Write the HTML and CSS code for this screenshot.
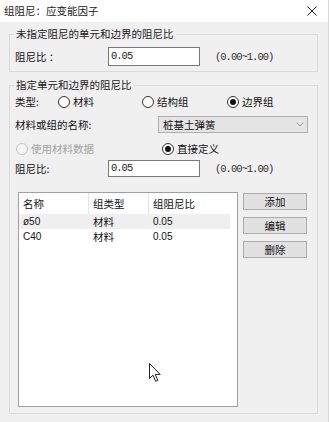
FILE: index.html
```html
<!DOCTYPE html>
<html>
<head>
<meta charset="utf-8">
<link rel="stylesheet" href="styles.css">
</head>
<body>
<div class="titlebar">
  <span class="title">组阻尼：应变能因子</span>
  <svg class="close" width="10" height="10" viewBox="0 0 10 10"><path d="M0.5 0.5L9.5 9.5M9.5 0.5L0.5 9.5" stroke="#222" stroke-width="1" fill="none"/></svg>
</div>
<fieldset class="group g1">
  <legend>未指定阻尼的单元和边界的阻尼比</legend>
  <div class="row r-damp1">
    <span class="lbl w93">阻尼比 ：</span>
    <span class="input">0.05</span>
    <span class="range">(0.00~1.00)</span>
  </div>
</fieldset>
<fieldset class="group g2">
  <legend>指定单元和边界的阻尼比</legend>
  <div class="row r-type">
    <span class="lbl w43">类型:</span>
    <span class="radio w84"><i class="dot"></i>材料</span>
    <span class="radio w85"><i class="dot"></i>结构组</span>
    <span class="radio"><i class="dot on"></i>边界组</span>
  </div>
  <div class="row r-name">
    <span class="lbl w143">材料或组的名称:</span>
    <span class="select">桩基土弹簧<svg class="chev" width="8" height="5" viewBox="0 0 8 5"><path d="M0.5 0.5L4 4L7.5 0.5" stroke="#999" fill="none"/></svg></span>
  </div>
  <div class="row r-src">
    <span class="radio disabled w145"><i class="dot"></i>使用材料数据</span>
    <span class="radio"><i class="dot on"></i>直接定义</span>
  </div>
  <div class="row r-damp2">
    <span class="lbl w93">阻尼比:</span>
    <span class="input">0.05</span>
    <span class="range">(0.00~1.00)</span>
  </div>
  <div class="listarea">
    <div class="list">
      <div class="lhead">
        <span class="c1">名称</span><span class="c2">组类型</span><span class="c3">组阻尼比</span>
      </div>
      <div class="lrow sel"><span class="c1 num">ø50</span><span class="c2">材料</span><span class="c3 num">0.05</span></div>
      <div class="lrow"><span class="c1 num">C40</span><span class="c2">材料</span><span class="c3 num">0.05</span></div>
    </div>
    <div class="buttons">
      <span class="btn">添加</span>
      <span class="btn">编辑</span>
      <span class="btn">删除</span>
    </div>
  </div>
</fieldset>
<svg class="cursor" width="13" height="20" viewBox="0 0 13 20"><path d="M0.5 0.5L0.5 15.5L4 12.2L6.6 18.3L8.8 17.4L6.3 11.4L11.2 11.4Z" fill="#fff" stroke="#222" stroke-width="1" stroke-linejoin="miter"/></svg>
</body>
</html>
```
FILE: styles.css
```css
* { box-sizing: border-box; }
html, body { margin: 0; padding: 0; }
body {
  width: 329px;
  height: 422px;
  background: #f0f0f0;
  font-family: "Noto Sans CJK SC", "Noto Sans", sans-serif;
  font-size: 10.5px;
  line-height: 14px;
  color: #111;
  overflow: hidden;
  position: relative;
  border-right: 1px solid #d8d8d8;
}
.titlebar {
  height: 22px;
  background: #fff;
  display: flex;
  align-items: center;
  justify-content: space-between;
  padding: 0 11px 0 4px;
}
.title { font-size: 10.5px; color: #222; }
.group {
  margin: 5px 0 0 9px;
  width: 309px;
  border: 1px solid #d9d9d9;
  padding: 0 5px;
  min-width: 0;
}
.group legend {
  padding: 0 2px;
  margin-left: -1px;
  line-height: 14px;
  color: #1a1a1a;
}
.g2 { margin-top: 6px; padding-bottom: 6px; }
.row { display: flex; align-items: center; }
.lbl { flex: none; }
.w43 { width: 43px; }
.w84 { width: 84px; }
.w85 { width: 85px; }
.w93 { width: 93px; }
.w143 { width: 143px; }
.w145 { width: 146px; }
.r-damp1 { padding: 6px 0 5px; }
.input {
  width: 92px;
  height: 19px;
  background: #fff;
  border: 1px solid #7a7a7a;
  font-family: "Liberation Mono", monospace;
  font-size: 10.5px;
  letter-spacing: -1px;
  line-height: 17px;
  padding-left: 2px;
  color: #222;
}
.range {
  margin-left: 15px;
  font-family: "Liberation Mono", monospace;
  font-size: 10.5px;
  letter-spacing: -1px;
  color: #333;
}
.r-type { margin-top: 2px; height: 16px; }
.radio { display: flex; align-items: center; flex: none; }
.dot {
  width: 12px;
  height: 12px;
  border: 1px solid #333;
  border-radius: 50%;
  background: #fff;
  margin-right: 3px;
  display: flex;
  align-items: center;
  justify-content: center;
}
.dot.on::after {
  content: "";
  width: 6px;
  height: 6px;
  border-radius: 50%;
  background: #111;
}
.disabled { color: #a2a2a2; }
.disabled .dot { border-color: #c4c4c4; background: #f5f5f5; }
.r-name { margin-top: 6px; height: 17px; }
.select {
  width: 150px;
  height: 17px;
  background: #e5e5e5;
  border: 1px solid #b0b0b0;
  display: flex;
  align-items: center;
  justify-content: space-between;
  padding: 0 3px 0 4px;
}
.r-src { margin-top: 8px; height: 16px; padding-left: 1px; }
.r-damp2 { margin-top: 3px; }
.r-damp2 .input { height: 17px; line-height: 15px; }
.listarea { display: flex; margin-top: 15px; padding-left: 3px; }
.list {
  width: 220px;
  height: 215px;
  background: #fff;
  border: 1px solid #a0a0a0;
}
.lhead, .lrow { display: flex; width: 211px; }
.lhead { height: 21px; align-items: center; }
.lhead span { height: 21px; line-height: 21px; border-right: 1px solid #e5e5e5; }
.lhead .c3 { border-right: none; }
.lrow { height: 15px; line-height: 15px; }
.lrow.sel { background: #efefef; }
.c1 { width: 70px; padding-left: 4px; }
.c2 { width: 60px; padding-left: 4px; }
.c3 { width: 81px; padding-left: 4px; }
.num { font-family: "Liberation Sans", sans-serif; font-size: 10px; }
.buttons { display: flex; flex-direction: column; gap: 7px; margin: 0 0 0 5px; padding-top: 1px; }
.btn {
  width: 64px;
  height: 17px;
  background: #e1e1e1;
  border: 1px solid #adadad;
  text-align: center;
  line-height: 15px;
}
.cursor { position: absolute; left: 149px; top: 363px; }
```
